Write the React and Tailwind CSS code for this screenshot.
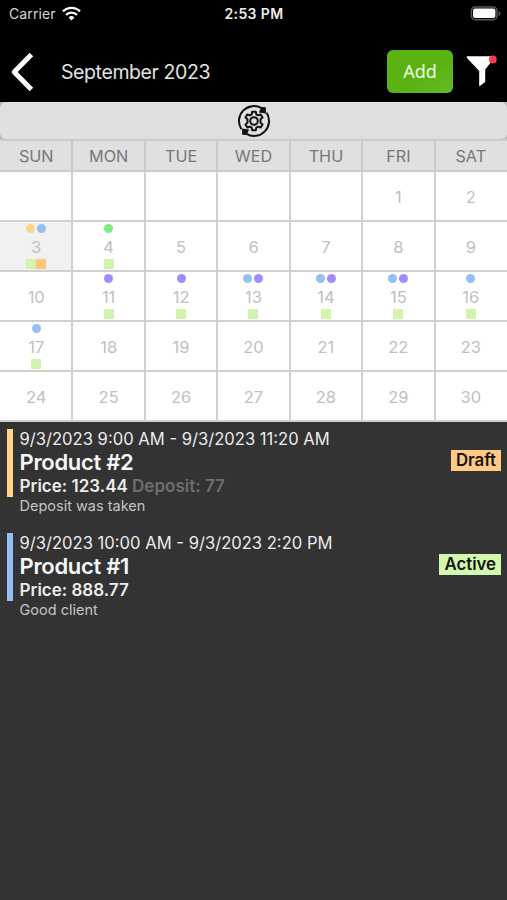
import React, { useState } from "react";

const weekDays = ["SUN", "MON", "TUE", "WED", "THU", "FRI", "SAT"];

const YELLOW = "bg-[#fdd583]";
const BLUE = "bg-[#94bff0]";
const GREEN = "bg-[#7fec7f]";
const PURPLE = "bg-[#a18bfa]";
const LIME = "bg-[#d2f3ab]";
const ORANGE = "bg-[#ffc57c]";

// dots = events of the day, squares = their statuses
const marks = {
  3: { dots: [YELLOW, BLUE], squares: [LIME, ORANGE] },
  4: { dots: [GREEN], squares: [LIME] },
  11: { dots: [PURPLE], squares: [LIME] },
  12: { dots: [PURPLE], squares: [LIME] },
  13: { dots: [BLUE, PURPLE], squares: [LIME] },
  14: { dots: [BLUE, PURPLE], squares: [LIME] },
  15: { dots: [BLUE, PURPLE], squares: [LIME] },
  16: { dots: [BLUE], squares: [LIME] },
  17: { dots: [BLUE], squares: [LIME] },
};

const events = [
  {
    id: 2,
    time: "9/3/2023 9:00 AM - 9/3/2023 11:20 AM",
    name: "Product #2",
    price: "Price: 123.44",
    deposit: "Deposit: 77",
    note: "Deposit was taken",
    status: "Draft",
    bar: "bg-[#fdd583]",
    badge: "bg-[#ffca86]",
  },
  {
    id: 1,
    time: "9/3/2023 10:00 AM - 9/3/2023 2:20 PM",
    name: "Product #1",
    price: "Price: 888.77",
    note: "Good client",
    status: "Active",
    bar: "bg-[#94bff0]",
    badge: "bg-[#d2f7ae]",
  },
];

function StatusBar() {
  return (
    <div className="grid h-[27px] grid-cols-3 items-center pr-1.5 pl-[7px] text-white">
      <div className="flex items-center gap-[6px] pl-[2px]">
        <span className="text-[14px] tracking-[0.1px] text-[#d6d6d6]">Carrier</span>
        <svg width="19" height="15" viewBox="0 0 19 15" fill="none" stroke="currentColor" strokeWidth="2.3">
          <path d="M1 5.4a12 12 0 0 1 17 0" />
          <path d="M4 8.9a7.8 7.8 0 0 1 11 0" />
          <path d="M6.6 11.4a4.1 4.1 0 0 1 5.8 0L9.5 14.4z" fill="currentColor" stroke="none" />
        </svg>
      </div>
      <span className="text-center text-[14px] font-semibold tracking-[0.4px] text-[#ededed]">2:53 PM</span>
      <svg className="ml-auto" width="31" height="15" viewBox="0 0 31 15">
        <rect x="1.4" y="0.9" width="25.6" height="12.8" rx="4" fill="none" stroke="#59595b" strokeWidth="1.5" />
        <rect x="3" y="2.5" width="22.4" height="9.6" rx="2" fill="#fff" />
        <path d="M28.6 5v5c1.2-.5 1.7-1.4 1.7-2.5s-.5-2-1.7-2.5z" fill="#59595b" />
      </svg>
    </div>
  );
}

function Header() {
  return (
    <div className="flex h-[75px] items-center pt-[14px] pl-[9px]">
      <button className="w-[52px] text-white">
        <svg width="26" height="42" viewBox="0 0 26 42" fill="none" stroke="currentColor" strokeWidth="5">
          <path d="M22.4 3.5 5.2 21 22.4 38.5" strokeLinejoin="round" />
        </svg>
      </button>
      <h1 className="flex-1 pt-[2px] text-[19.5px] tracking-[-0.4px] text-[#e4e4e4]">September 2023</h1>
      <button className="h-[43px] w-[66px] rounded-[6px] bg-linear-to-br from-[#5ab312] from-60% to-[#67bb26] font-['Noto_Sans',sans-serif] text-[18px] text-[#f0fbe6]">
        Add
      </button>
      <button className="mr-[9px] ml-[13px] text-white">
        <svg width="32" height="34" viewBox="0 0 32 34">
          <path d="M0.8 1.3H27.5V4L19.2 14.4V27L13.2 31.4V16L0.8 2.8z" fill="currentColor" />
          <circle cx="26.8" cy="4.5" r="3.9" fill="#f93a4c" />
        </svg>
      </button>
    </div>
  );
}

function SyncGearIcon() {
  return (
    <svg width="34" height="34" viewBox="0 0 34 34" fill="none" stroke="#111" strokeWidth="2">
      <path d="M4.4 25.2A15 15 0 0 1 24.6 4.1" />
      <path d="M29.6 8.8A15 15 0 0 1 9.4 29.9" />
      <path d="M28.8 3.2 29 9.4 21.8 8.4 24.6 3z" fill="#111" stroke="none" />
      <path d="M5.2 30.8 5 24.6 12.2 25.6 9.4 31z" fill="#111" stroke="none" />
      <path
        strokeLinejoin="round"
        d="M15.2 7.7h3.6l.5 2.6 1.9 1.1 2.5-.9 1.8 3.1-2 1.7v3.4l2 1.7-1.8 3.1-2.5-.9-1.9 1.1-.5 2.6h-3.6l-.5-2.6-1.9-1.1-2.5.9-1.8-3.1 2-1.7v-3.4l-2-1.7 1.8-3.1 2.5.9 1.9-1.1z"
      />
      <circle cx="17" cy="17" r="3.8" />
    </svg>
  );
}

function DayCell({ day, selected, onSelect }) {
  const mark = marks[day] || { dots: [], squares: [] };
  return (
    <div
      onClick={() => day && onSelect(day)}
      className={`-ml-px flex h-full flex-col items-center border-b-2 border-l-2 border-[#d0d0d0] pt-[2px] pr-px first:ml-0 first:border-l-0 first:pr-0 ${
        selected ? "bg-[#f1f1f1]" : "bg-white"
      }`}
    >
      <div className="flex h-[9px] gap-[2px]">
        {mark.dots.map((color) => (
          <span key={color} className={`size-[9px] rounded-full ${color}`} />
        ))}
      </div>
      <span className="flex h-[26px] items-center pt-[3px] text-[16.5px] text-[#bfbfbf]">{day}</span>
      <div className="flex h-[10px]">
        {mark.squares.map((color) => (
          <span key={color} className={`size-[10px] ${color}`} />
        ))}
      </div>
    </div>
  );
}

function EventRow({ event }) {
  return (
    <div className="flex h-[104px] pr-[6px] pl-[7px]">
      <div className={`h-[68px] w-[6px] ${event.bar}`} />
      <div className="flex-1 pl-[6.5px] text-[#ececec]">
        <p className="text-[16.6px] leading-[20px]">{event.time}</p>
        <p className="text-[22px] leading-[27px] font-semibold tracking-[-0.3px] text-[#f6f6f6]">{event.name}</p>
        <p className="text-[17px] leading-[20px] font-semibold">
          {event.price} {event.deposit && <span className="text-[#6e6e6e]">{event.deposit}</span>}
        </p>
        <p className="text-[14.5px] leading-[19px] text-[#c4c4c4]">{event.note}</p>
      </div>
      <span className={`mt-[21px] h-[21px] px-[5px] text-[16.8px] leading-[20px] font-semibold text-[#17130d] ${event.badge}`}>
        {event.status}
      </span>
    </div>
  );
}

function App() {
  const [selectedDay, setSelectedDay] = useState(3);

  // September 2023 starts on Friday
  const cells = Array.from({ length: 35 }, (_, i) => (i < 5 ? null : i - 4));
  const weeks = [0, 1, 2, 3, 4].map((w) => cells.slice(w * 7, w * 7 + 7));

  return (
    <div className="flex h-[900px] w-[507px] flex-col overflow-hidden bg-[#333333] font-['Inter',sans-serif]">
      <div className="bg-black">
        <StatusBar />
        <Header />
      </div>
      <div className="h-[37px] bg-[#b9b9b9]">
        <div className="flex h-full items-center justify-center rounded-[6px] bg-[#e0e0e0]">
          <SyncGearIcon />
        </div>
      </div>
      <div className="grid h-[33px] grid-cols-7 border-y-2 border-[#cbcbcb] bg-[#e0e0e0]">
        {weekDays.map((d) => (
          <div key={d} className="-ml-px flex items-center justify-center border-l-2 border-[#cbcbcb] pt-px pr-px text-[16.2px] text-[#777777] first:ml-0 first:border-l-0 first:pr-0">
            {d}
          </div>
        ))}
      </div>
      <div className="h-[250px]">
        {weeks.map((week, w) => (
          <div key={w} className="grid h-[50px] grid-cols-7">
            {week.map((day, i) => (
              <DayCell key={i} day={day} selected={day === selectedDay} onSelect={setSelectedDay} />
            ))}
          </div>
        ))}
      </div>
      <div className="flex-1 pt-[7px]">
        {events.map((event) => (
          <EventRow key={event.id} event={event} />
        ))}
      </div>
    </div>
  );
}

export default App;
